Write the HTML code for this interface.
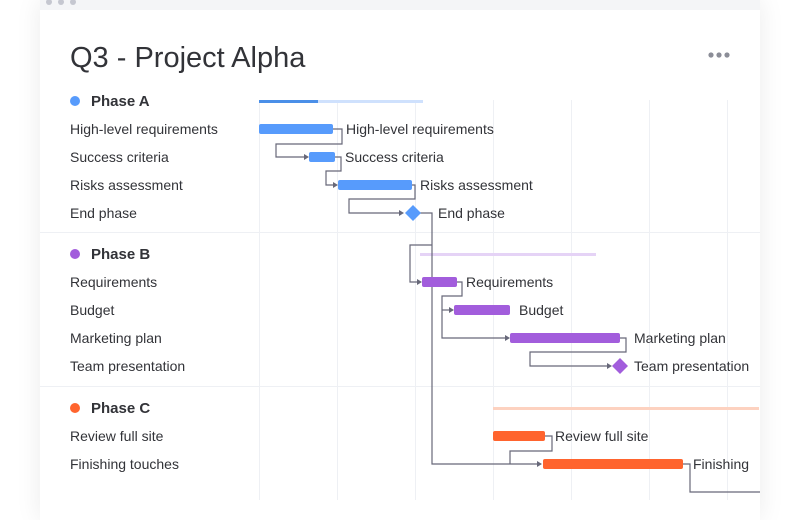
<!DOCTYPE html>
<html><head><meta charset="utf-8"><style>
html,body{margin:0;padding:0;background:#fff;width:800px;height:500px;overflow:hidden}
.card{position:absolute;left:40px;top:0;width:720px;height:520px;background:#fff;box-shadow:0 0 24px rgba(0,0,0,0.08)}
svg{position:absolute;left:0;top:0}
text{font-family:"Liberation Sans",sans-serif;fill:#323338;font-size:14px}
</style></head><body>
<div class="card"></div>
<svg width="800" height="500" viewBox="0 0 800 500">
<rect x="40" y="0" width="720" height="10" fill="#f4f5f7"/>
<circle cx="49" cy="2" r="3" fill="#c5c7d0"/><circle cx="61" cy="2" r="3" fill="#c5c7d0"/><circle cx="73" cy="2" r="3" fill="#c5c7d0"/>
<text x="70" y="67" style="font-size:29px;fill:#323338">Q3 - Project Alpha</text>
<circle cx="711" cy="55" r="2.6" fill="#8b8d97"/><circle cx="719" cy="55" r="2.6" fill="#8b8d97"/><circle cx="727" cy="55" r="2.6" fill="#8b8d97"/>
<g stroke="#eef0f4" stroke-width="1">
<line x1="259.5" y1="100" x2="259.5" y2="500"/><line x1="337.5" y1="100" x2="337.5" y2="500"/><line x1="415.5" y1="100" x2="415.5" y2="500"/><line x1="493.5" y1="100" x2="493.5" y2="500"/><line x1="571.5" y1="100" x2="571.5" y2="500"/><line x1="649.5" y1="100" x2="649.5" y2="500"/><line x1="727.5" y1="100" x2="727.5" y2="500"/>
<line x1="40" y1="232.5" x2="760" y2="232.5"/><line x1="40" y1="386.5" x2="760" y2="386.5"/>
</g>
<circle cx="75" cy="101" r="5" fill="#579bfc"/><text x="91" y="106" style="font-weight:bold;font-size:15px">Phase A</text>
<circle cx="75" cy="254" r="5" fill="#a25ddc"/><text x="91" y="259" style="font-weight:bold;font-size:15px">Phase B</text>
<circle cx="75" cy="408" r="5" fill="#ff642e"/><text x="91" y="413" style="font-weight:bold;font-size:15px">Phase C</text>
<g>
<text x="70" y="134">High-level requirements</text>
<text x="70" y="162">Success criteria</text>
<text x="70" y="190">Risks assessment</text>
<text x="70" y="218">End phase</text>
<text x="70" y="287">Requirements</text>
<text x="70" y="315">Budget</text>
<text x="70" y="343">Marketing plan</text>
<text x="70" y="371">Team presentation</text>
<text x="70" y="441">Review full site</text>
<text x="70" y="469">Finishing touches</text>
</g>
<rect x="259" y="100" width="164" height="3" fill="#cfe1fd"/><rect x="259" y="100" width="59" height="3" fill="#4a8fe8"/>
<rect x="420" y="253" width="176" height="3" fill="#e5d3f6"/>
<rect x="493" y="407" width="266" height="3" fill="#fdd2c0"/>
<g fill="none" stroke="#676879" stroke-width="1.2">
<path d="M333 129H342V144H276V157H305"/>
<path d="M335 157H341V171H326V185H334"/>
<path d="M412 185H415V199H349V213H400"/>
<path d="M420 213H432V464H538"/>
<path d="M432 245H410V282H418"/>
<path d="M457 282H462V296H442V338H506"/>
<path d="M442 310H450"/>
<path d="M620 338H626V352H530V366H608"/>
<path d="M545 436H552V451H510V464"/>
<path d="M683 464H690V492H760"/>
</g>
<g fill="#676879">
<path d="M309 157l-5-3v6z"/><path d="M338 185l-5-3v6z"/><path d="M404 213l-5-3v6z"/><path d="M422 282l-5-3v6z"/><path d="M454 310l-5-3v6z"/><path d="M510 338l-5-3v6z"/><path d="M612 366l-5-3v6z"/><path d="M542 464l-5-3v6z"/>
</g>
<g fill="#579bfc">
<rect x="259" y="124" width="74" height="10" rx="2"/>
<rect x="309" y="152" width="26" height="10" rx="2"/>
<rect x="338" y="180" width="74" height="10" rx="2"/>
<path d="M413 205l8 8-8 8-8-8z"/>
</g>
<g fill="#a25ddc">
<rect x="422" y="277" width="35" height="10" rx="2"/>
<rect x="454" y="305" width="56" height="10" rx="2"/>
<rect x="510" y="333" width="110" height="10" rx="2"/>
<path d="M620 358l8 8-8 8-8-8z"/>
</g>
<g fill="#ff642e">
<rect x="493" y="431" width="52" height="10" rx="2"/>
<rect x="543" y="459" width="140" height="10" rx="2"/>
</g>
<g>
<text x="346" y="134">High-level requirements</text>
<text x="345" y="162">Success criteria</text>
<text x="420" y="190">Risks assessment</text>
<text x="438" y="218">End phase</text>
<text x="466" y="287">Requirements</text>
<text x="519" y="315">Budget</text>
<text x="634" y="343">Marketing plan</text>
<text x="634" y="371">Team presentation</text>
<text x="555" y="441">Review full site</text>
<text x="693" y="469">Finishing</text>
</g>
</svg>
</body></html>
